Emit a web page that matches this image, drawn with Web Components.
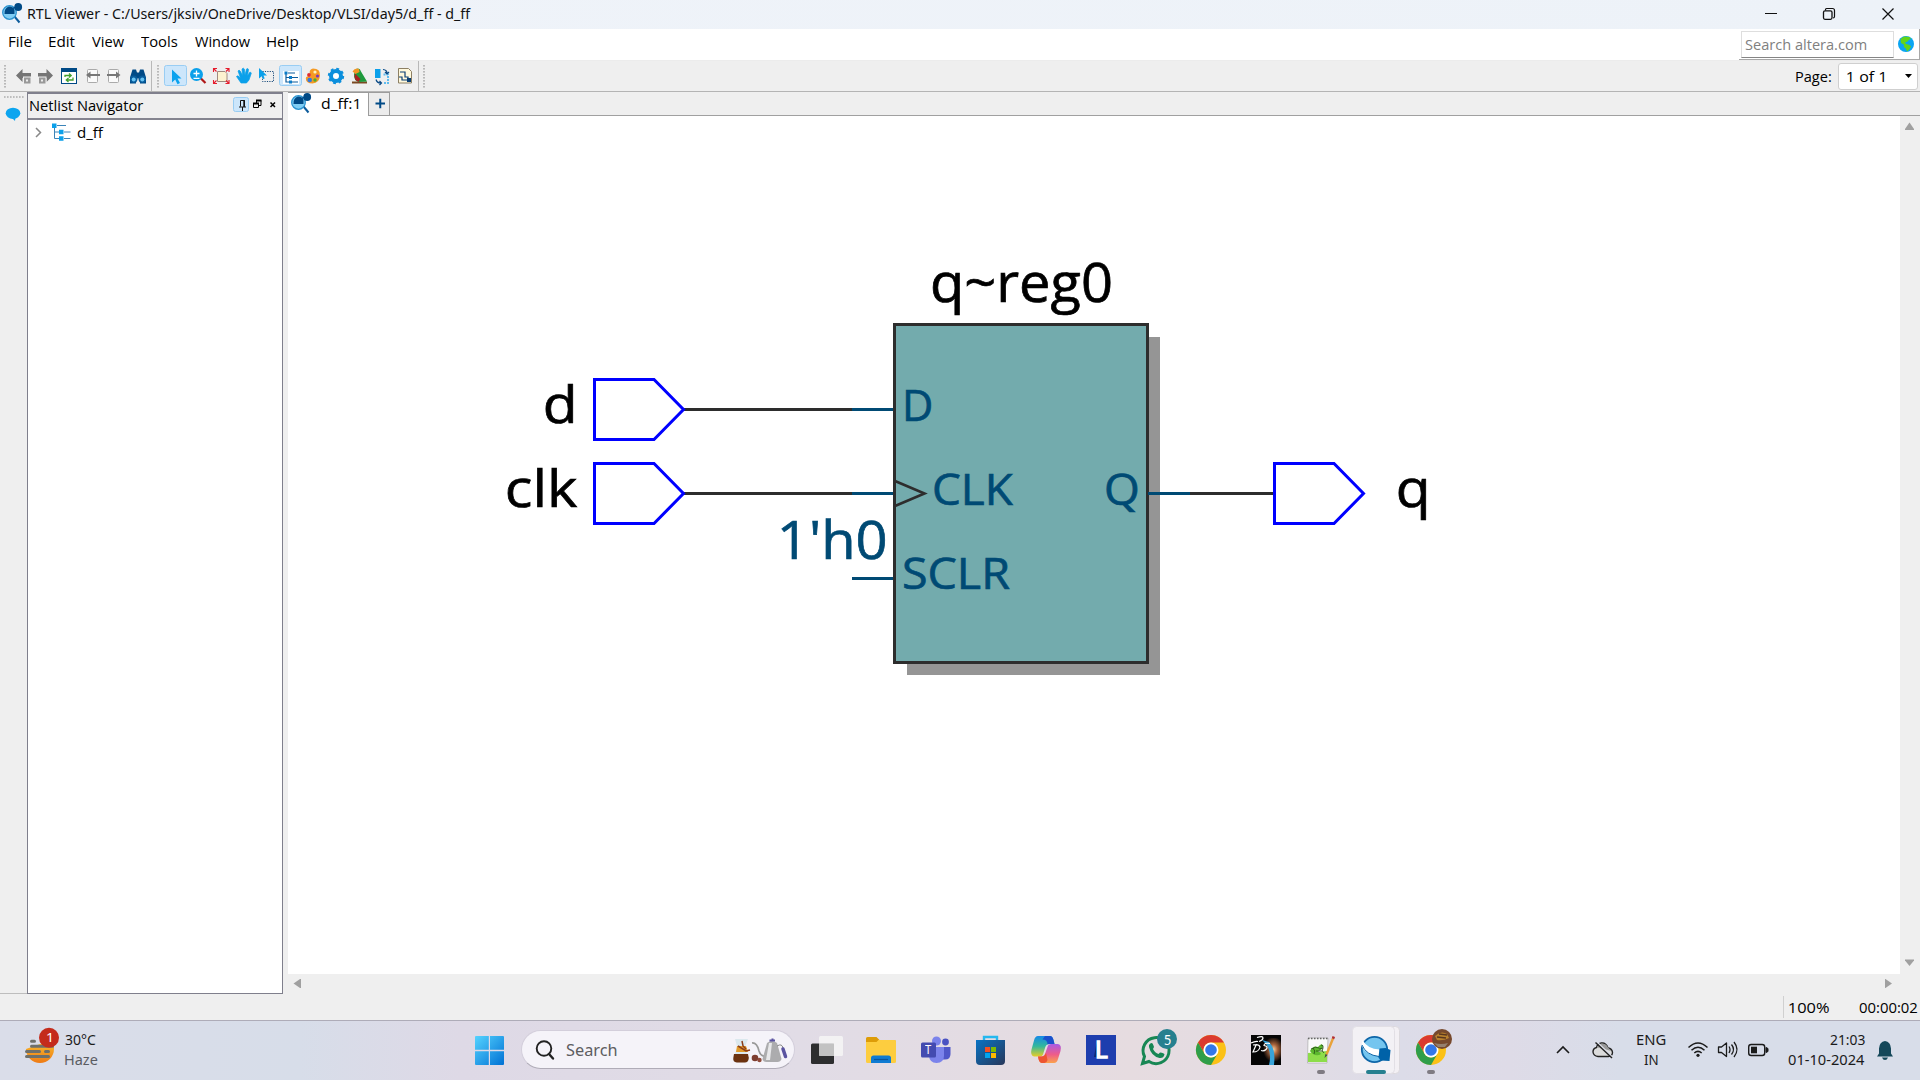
<!DOCTYPE html>
<html lang="en">
<head>
<meta charset="utf-8">
<title>RTL Viewer</title>
<style>
html,body{margin:0;padding:0;width:1920px;height:1080px;overflow:hidden;background:#efefef}
</style>
</head>
<body>
<rtl-desktop></rtl-desktop>
<script>
const UI = '"Open Sans","Noto Sans",sans-serif';
const SYS = '"Noto Sans","Open Sans",sans-serif';
const ctx = document.createElement('canvas').getContext('2d');
function ink(text, font) {
  ctx.font = font;
  const m = ctx.measureText(text);
  return { l: -m.actualBoundingBoxLeft, w: m.actualBoundingBoxLeft + m.actualBoundingBoxRight };
}
function define(tag, css, html, after) {
  const t = document.createElement('template');
  t.innerHTML = `<style>:host{display:block;box-sizing:border-box}*{box-sizing:border-box}${css}</style>${html}`;
  customElements.define(tag, class extends HTMLElement {
    constructor() {
      super();
      this.attachShadow({ mode: 'open' }).appendChild(t.content.cloneNode(true));
    }
    connectedCallback() { if (after) after(this, this.shadowRoot); }
  });
}

/* A label whose glyphs are scaled horizontally to fill a given ink width. */
define('fit-text', ':host{display:block;flex:none;white-space:pre}span{display:inline-block;transform-origin:0 50%}', '<span></span>', (el, root) => {
  const s = root.querySelector('span');
  const text = el.getAttribute('text'), w = +el.getAttribute('w'), size = el.getAttribute('size') || 14.2;
  const fam = el.hasAttribute('sys') ? SYS : UI;
  const m = ink(text, `${size}px ${fam}`);
  s.textContent = text;
  const k = w / m.w;
  s.style.cssText = `font:${size}px/20px ${fam};transform:translateX(${-m.l * k}px) scaleX(${k})`;
  el.style.width = w + 'px';
  el.style.height = '20px';
});

const dots = (x) => Array.from({ length: 8 }, (_, i) => `<rect x="${x}" y="${65 + i * 3}" width="2" height="1.6" fill="#b9b9b9"/>`).join('');
const lens = (x, y) => `<g transform="translate(${x} ${y})"><path d="M12.5 13.5l5 6" stroke="#0d5c9c" stroke-width="2" /><circle cx="7.500" cy="9.500" r="6.800" fill="#7fcdf4" stroke="#2a93d0" stroke-width="1.300"/><path d="M2.500 11q-.5-6 4.500-7.500 4.500 0 5.500 3.500v4z" fill="#004a86"/><path d="M10 6l5-3" stroke="#004a86" stroke-width="1.300"/><circle cx="16.200" cy="4" r="3.900" fill="#004a86"/></g>`;
const chrome = (x, y) => `<g transform="translate(${x} ${y})"><circle r="15" fill="#fbc116"/><path d="M-13-7.500A15 15 0 0 1 13-7.500H0A7.500 7.500 0 0 0-6.500 3.750z" fill="#db3a2f"/><path d="M-13-7.500A15 15 0 0 0 0 15L6.500 3.750A7.500 7.500 0 0 1-6.500 3.750z" fill="#2f9e4a"/><circle r="7.500" fill="#fff"/><circle r="5.800" fill="#3377e8"/></g>`;
const hl = (x) => `<rect x="${x + .5}" y="65.500" width="22" height="20" rx="2" fill="#cce6fb" stroke="#99cdf3"/>`;
const ICONS = {
  '': '',
  app: lens(2, 3),
  min: '<path d="M1765 13.500h12" stroke="#111" stroke-width="1"/>',
  max: '<path d="M1825.500 10.500V9.500q0-1 1-1h6q2 0 2 2v6q0 1.500-1.500 1.500" fill="none" stroke="#111" stroke-width="1.200"/><rect x="1823.500" y="10.800" width="8.500" height="8.500" rx="1.500" fill="none" stroke="#111" stroke-width="1.300"/>',
  close: '<path d="M1882.500 8.500l11 11m0-11l-11 11" stroke="#111" stroke-width="1.200"/>',
  globe: '<circle cx="1906" cy="44" r="8" fill="#0aa5f2"/><path d="M1900.500 39l3.500-2.500 5.500.5 1.500 2-2 .8-1.500 1.700-2.500 1 1 1.500 3 .8 2 1.500-1.500 3-2.500 2.300-1.200-3-2-1.500.2-2.300-3-1.800z" fill="#63d419"/>',
  grip: dots(4), grip2: dots(157), grip3: dots(423),
  railgrip: Array.from({ length: 7 }, (_, i) => `<rect x="${4 + i * 3}" y="96" width="1.600" height="2" fill="#bdbdbd"/>`).join(''),
  bubble: '<ellipse cx="13" cy="113.300" rx="7.300" ry="5.600" fill="#0da5ef"/><path d="M11 117l4 4 .5-4z" fill="#0da5ef"/>',
  back: '<path d="M16 75.500l6.500-6.500v4H31v5h-8.500v4z" fill="#757575"/><rect x="23.500" y="77" width="7.500" height="7" fill="#999" stroke="#efefef"/><rect x="26" y="79.500" width="2" height="2" fill="#eee"/>',
  fwd: '<path d="M53 75.500L46.500 69v4H38v5h8.500v4z" fill="#757575"/><rect x="38.500" y="77" width="7.500" height="7" fill="#999" stroke="#efefef"/><rect x="41" y="79.500" width="2" height="2" fill="#eee"/>',
  refresh: '<rect x="61.500" y="69" width="15" height="14.500" fill="#fff" stroke="#004a86"/><rect x="61" y="68" width="16" height="4" fill="#004a86"/><path d="M65 77v-1.500h5.500M69 73.500l2.200 2-2.200 2M73 77.500V80h-6M68.500 78l-2.200 2 2.200 2" fill="none" stroke="#43a02d" stroke-width="1.300"/>',
  pageback: '<rect x="87.500" y="69.500" width="10" height="13" rx="1" fill="#fafafa" stroke="#aaa"/><path d="M90 75h10" stroke="#777" stroke-width="2"/><path d="M86 75l4.500-3.500v7z" fill="#777"/>',
  pagefwd: '<rect x="108.500" y="69.500" width="10" height="13" rx="1" fill="#fafafa" stroke="#aaa"/><path d="M107 75h10" stroke="#777" stroke-width="2"/><path d="M120.500 75l-4.500-3.500v7z" fill="#777"/>',
  binoc: '<path d="M132.500 69.500h3.500l1 3h2l1-3h3.500l2.500 8v6h-6v-5h-4v5h-6v-6z" fill="#004a86"/><circle cx="133.700" cy="79.300" r="3.700" fill="#075c9c"/><circle cx="142.300" cy="79.300" r="3.700" fill="#075c9c"/><circle cx="133.700" cy="79.500" r="2" fill="#68c2f2"/><circle cx="142.300" cy="79.500" r="2" fill="#68c2f2"/>',
  cursor: hl(164) + '<path d="M172 69.500l9.500 9h-4l2.500 4.500-2.500 1.200-2.300-4.700-3.200 3z" fill="#0aa2ee"/>',
  zoomin: '<path d="M200.500 78l5 5" stroke="#b01818" stroke-width="2.200"/><circle cx="196.500" cy="74.500" r="6.500" fill="#0ba0ea"/><path d="M193.500 73.500h6m-3-3v6m-3 1.800h6" stroke="#fff" stroke-width="1.300"/>',
  fit: '<path d="M217.500 71.500h7.500l2 2v8h-9.500z" fill="#fdf3d0" stroke="#a08a80" stroke-width="1"/><path d="M213.500 72v-3.500h3.500M225.500 68.500h3.500V72M229 80v3.500h-3.500M217 83.500h-3.500V80M213.500 68.500l3 3m12.500-3l-3 3m3 12l-3-3m-12.500 3l3-3" fill="none" stroke="#e51c2c" stroke-width="1.100"/>',
  hand: '<path d="M241 83l-4.500-6.500q1-1.500 3 .5L240.500 78 238 71q1-1.700 2.200 0L242.500 75.500 242 69q1.300-1.700 2.300 0L245 75l1.500-6q1.500-1 2 .5L247.500 76l2-3.500q1.500-.8 1.800.7L249 80l-2.500 3z" fill="#0ba0ea" stroke="#0ba0ea" stroke-width=".7"/>',
  select: '<rect x="262.500" y="71.500" width="11" height="10" fill="none" stroke="#1b4c7c" stroke-dasharray="1.200 1.200"/><path d="M259 68l8 7.500h-3.500l1.200 3-1.600.6-1.400-2.800L259 78.500z" fill="#0ba0ea"/>',
  tree: hl(279) + '<rect x="283" y="71" width="16" height="13" fill="#fff"/><path d="M288 73h7M286 73v9h4M286 77.500h4M292 77.500h6M292 82h6" fill="none" stroke="#0d5c9c" stroke-width="1.200"/><path d="M284.500 71.500h3v3h-3zM289 76h3v3h-3zM289 80.500h3v3h-3z" fill="#0b7cc8"/>',
  palette: '<path d="M313 68.500q7.500 0 7 7-.5 7.500-7.500 8-6.500 0-6.700-5 .2-3 3.200-1.500 2.500 0 1-3-1.500-4.500 3-5.500z" fill="#f59a23"/><circle cx="315" cy="72" r="1.600" fill="#fff1c0"/><circle cx="317.500" cy="76" r="1.600" fill="#7b35c0"/><circle cx="315" cy="80" r="1.700" fill="#4caf30"/><circle cx="309.700" cy="80" r="2.300" fill="#3377e0"/><circle cx="309" cy="75" r="1.900" fill="#e02d2d"/>',
  gear: '<circle cx="336" cy="76" r="5" fill="#fff" stroke="#0b8fdc" stroke-width="4"/><circle cx="336" cy="76" r="7.200" fill="none" stroke="#0b8fdc" stroke-width="2" stroke-dasharray="2.830 2.830"/>',
  bird: '<path d="M352 82.500h15" stroke="#7a4a22" stroke-width="2"/><path d="M356 69q4-1.500 5 2.500l6 10-7.500.5q-6-1-5.500-8z" fill="#1e9a3c"/><path d="M355 73.500q-2 6 3.500 8.500l2-3z" fill="#a82020"/><path d="M352.500 71.500q2.500-4 6.500-2.500l.5 3-4 2z" fill="#f29522"/>',
  swap: '<rect x="375" y="69" width="5.500" height="9" fill="#0ba0ea"/><path d="M383.500 74.500h4.500v8.500h-4.500" fill="none" stroke="#5fbcee" stroke-width="2" stroke-dasharray="2 1"/><path d="M383 69.500q4 .5 4 3.500m-2-1l2 2 2-2M376 79.500q1 3.500 4.500 3.500m-1-2l2 2-2 2" fill="none" stroke="#0a4a86" stroke-width="1.200"/>',
  netpage: '<path d="M398.500 68.500h10l3 3v11.500h-13z" fill="#fff8dc" stroke="#8d8064"/><path d="M400 72h5v5h3v3M399 77h3v3h6" fill="none" stroke="#0a3f74" stroke-width="1.200"/><rect x="407" y="78" width="4" height="4" fill="#0a3f74"/>',
  comboarrow: '<path d="M1905 74h7l-3.500 4z" fill="#000"/>',
  pin: '<rect x="233.500" y="97.500" width="15" height="14" rx="2" fill="#cce6fb" stroke="#99cdf3"/><path d="M240.500 100.500h4v6m-4-6v6m-1.500.5h7m-3.500 0v4" fill="none" stroke="#111" stroke-width="1"/><path d="M244 100v7" stroke="#111" stroke-width="1.400"/>',
  restore: '<path d="M256.500 103v-2.500h4.500v5h-2M253.500 103.500h5v4h-5z" fill="none" stroke="#000"/><path d="M256 100.500h5.500M253 103.500h6" stroke="#000" stroke-width="1.800"/>',
  x: '<path d="M270.500 102.500l4.500 4.500m0-4.500l-4.500 4.500" stroke="#000" stroke-width="1.500"/>',
  chev: '<path d="M36 128l4.500 4.500L36 137" fill="none" stroke="#888" stroke-width="1.500"/>',
  treenode: '<path d="M57 125.500h9M54.500 127v11.500h5M54.500 132h5M64 132h6.500M64 138.500h6.500" fill="none" stroke="#3c84b8" stroke-width="1"/><path d="M52 123.500h4.500v4.500H52zM59 129.800h4.500v4.500H59zM59 136.200h4.500v4.500H59z" fill="#0ba0ea"/>',
  tablens: lens(291, 92),
  plus: '<path d="M375.500 103.500h9.500m-4.750-4.750v9.500" stroke="#004a86" stroke-width="2"/>',
  up: '<path d="M1909.500 122.500l4.500 6.500v1h-9v-1z" fill="#a0a0a0"/>',
  down: '<path d="M1909.500 966l4.500-5.500v-1h-9v1z" fill="#a0a0a0"/>',
  left: '<path d="M293.500 983.500l6.500-4.500h1v9h-1z" fill="#a0a0a0"/>',
  right: '<path d="M1892 983.500l-6.500-4.500h-.5v9h.5z" fill="#a0a0a0"/>',
  haze: '<defs><linearGradient id="h" x2="0" y2="1"><stop stop-color="#f8b52c"/><stop offset="1" stop-color="#ee7a14"/></linearGradient></defs><path d="M26 1049a14 14 0 0 0 28 0V1044H40z" fill="url(#h)"/><path d="M31.500 1041.300h3M31.500 1046.300h21M26.500 1051.400h13M45.500 1051.400h3M26.500 1056.500h22" stroke="#6e706c" stroke-width="3" stroke-linecap="round"/><circle cx="49" cy="1037.700" r="10" fill="#c42b1c"/>',
  start: '<defs><linearGradient id="ws" gradientUnits="userSpaceOnUse" x1="475" y1="1036" x2="504" y2="1065"><stop stop-color="#55d3ff"/><stop offset="1" stop-color="#0071d4"/></linearGradient></defs><path d="M476 1036h12.800v13.800H475V1037q0-1 1-1zM490 1036h13q1 0 1 1v12.800h-14zM475 1051.200h13.800V1065H476q-1 0-1-1zM490 1051.200h14V1064q0 1-1 1h-13z" fill="url(#ws)"/>',
  mag: '<circle cx="544" cy="1048.500" r="7.300" fill="none" stroke="#222" stroke-width="1.900"/><path d="M549 1054l4 4.500" stroke="#222" stroke-width="2.400" stroke-linecap="round"/>',
  coffee: '<path d="M735 1039h13l-3.500 9 4 8.500q1 5.500-3 6h-9q-4.500-.5-3-6l4-8.500z" fill="#dbe8ee"/><path d="M734 1054h14l.8 4q-.5 4.500-4 4.500h-8q-4-.5-3.500-4.500z" fill="#6c3210"/><path d="M737 1046h9l2 6h-12z" fill="#e29b2d"/><path d="M742 1041l1 5 3 3M738 1046l8 5 4-1" fill="none" stroke="#8c3e1a" stroke-width="1.500"/><circle cx="755" cy="1058" r="3.300" fill="#7d3d30"/><circle cx="759.500" cy="1060" r="2.200" fill="#8f4a3a"/><path d="M752 1043q5-.5 7 8 2 6 7 5" fill="none" stroke="#999" stroke-width="1.700"/><path d="M767 1043q5-4 10 0l4.500 16q-1 3-4 3h-11q-3.500 0-4-3z" fill="#acacae"/><path d="M769 1043l-3 17h4l2-17z" fill="#e8e8ea"/><path d="M769.500 1040.500h5.500m-2.500-2v2" stroke="#5a53a0" stroke-width="2"/><path d="M777 1046q5-3 6 2" fill="none" stroke="#888"/><path d="M783 1049l2.500 7.500" stroke="#5a53a0" stroke-width="3.500" stroke-linecap="round"/>',
  taskview: '<rect x="811" y="1043.500" width="23" height="20.500" rx="1.500" fill="#2d2e2f"/><rect x="819" y="1036" width="24" height="20" rx="1.500" fill="#f5f5f5" opacity=".88"/><path d="M819 1043.500h15V1056h-15z" fill="#bcbcbc" opacity=".8"/>',
  explorer: '<path d="M866 1038.500q0-1.500 1.500-1.500h9l3 3H894q2 0 2 2v6h-30z" fill="#dd9c08"/><path d="M866 1042h10.500l2-2H894.500q1.500 0 1.500 1.500v20q0 1.500-1.500 1.500h-27q-1.500 0-1.500-1.500z" fill="#fdcd3f"/><path d="M871 1063v-5q0-2.500 2.500-2.500h15q2.500 0 2.500 2.500v5z" fill="#0f7bd2"/><path d="M874 1059.500h14" stroke="#0a559c" stroke-width="1.200"/>',
  teams: '<circle cx="945.500" cy="1042" r="3.400" fill="#4a52c2"/><circle cx="936.500" cy="1041" r="4.500" fill="#7b83eb"/><path d="M939 1047h11.500v7q0 5.500-5.500 5.500h-6z" fill="#4f57c8"/><path d="M929 1047h15v9q0 6.500-7.500 7-7-.5-7.500-7z" fill="#7b83eb"/><rect x="921" y="1042.500" width="15" height="15" rx="1.500" fill="#434bb0"/>',
  store: '<defs><linearGradient id="s" x2="1" y2="1"><stop stop-color="#0873c4"/><stop offset="1" stop-color="#283759"/></linearGradient></defs><path d="M984 1041v-4h13v4" fill="none" stroke="#25b8ef" stroke-width="2.400"/><path d="M976 1040h29v21q0 4-4 4h-21q-4 0-4-4z" fill="url(#s)"/><path d="M985 1047h5v5h-5z" fill="#f25022"/><path d="M991 1047h5v5h-5z" fill="#7fba00"/><path d="M985 1053h5v5h-5z" fill="#00a4ef"/><path d="M991 1053h5v5h-5z" fill="#ffb900"/>',
  copilot: '<defs><linearGradient id="c1" x2="0" y2="1"><stop stop-color="#1689e8"/><stop offset=".5" stop-color="#33b89b"/><stop offset="1" stop-color="#e7cd28"/></linearGradient><linearGradient id="c2" x2="0" y2="1"><stop stop-color="#a75be5"/><stop offset=".55" stop-color="#ee5c8a"/><stop offset="1" stop-color="#fba24c"/></linearGradient></defs><path d="M1038 1036h12q2.500 0 3.500 4l1 4h-5q-3.500 0-4.500 4l-2 6.500q-.7 2-3 2h-6q-4-1-2.500-7l2.500-9q1-4.500 4-4.500z" fill="url(#c1)"/><path d="M1054 1063h-12q-2.500 0-3.500-4l-.5-2.500h3q3.500 0 4.500-4l2.500-7q.8-1.500 3-1.500h7q4 1 2.500 7l-2.500 8q-1 4-4 4z" fill="url(#c2)"/><path d="M1045 1036h5q2.500 0 3.500 4l1 4h-5.500l-1.500.5q0-5-5-5z" fill="#1b50cc"/><path d="M1038 1056.500h4q2.500 0 4-3.500l1.500 7q-.5 2.500-3 3h-2.500q-2.500 0-3.500-4z" fill="#ed5532"/>',
  lapp: '<rect x="1086" y="1035" width="30" height="30" fill="#1e3eae"/><path d="M1094 1057l2.500-14 3 11 6 3z" fill="#0d2a6c"/>',
  whatsapp: '<path d="M1142.500 1063.500l2-7a13 13 0 1 1 4.500 5z" fill="none" stroke="#188754" stroke-width="3"/><path d="M1149 1045q3-4 4.500.5l.5 1.500-1 2q2 4 5.500 5l1.500-1.500q4 .5 4.500 2-1 4-5 3.500-8.500-2-10.500-11z" fill="#188754"/><circle cx="1167" cy="1039" r="10" fill="#26808f"/>',
  chrome: chrome(1211, 1050),
  ds: '<defs><radialGradient id="d" cx=".6" cy=".5" r=".55"><stop stop-color="#f6d0a0"/><stop offset=".4" stop-color="#a8633a"/><stop offset="1" stop-color="#050505"/></radialGradient></defs><rect x="1251" y="1035" width="30" height="30" fill="#050505"/><rect x="1262" y="1038" width="19" height="23" fill="url(#d)"/><path d="M1262 1040q11 9 7 25h5q2-16-5-23z" fill="#38a3d8"/><path d="M1257 1037.500q6-2 6 .5 0 2-4 3.500M1251 1043q4-2 7-1.500M1256.500 1044l-3.500 8q6 0 7-5-1-3.500-7-2M1270 1043.500q-6-1-6 2 5 1 2 4-2 2-5 1" fill="none" stroke="#fff" stroke-width="1.200"/>',
  notepad: '<path d="M1308 1038h20l-1 25h-19.500z" fill="#fafafa" stroke="#aaa" stroke-width=".7"/><path d="M1308 1053l19-2v11h-19z" fill="#8ddd4a"/><path d="M1308 1038.500h20" stroke="#666" stroke-width="1.500" stroke-dasharray="1.500 1.500"/><path d="M1310 1051q3-6 8-4 4-5 5-1-1 5-5 5 5 3 1 4-6 1-9-4z" fill="#5cb82e"/><path d="M1311 1049q5-3 8-1m2-3q3 0 2 3l-4 1m-6-1q3 3 1 6m2-3h7m0-3q-2 3 1 5" fill="none" stroke="#244d14" stroke-width=".8"/><path d="M1333 1038.500l-6.500 16" stroke="#e8a23a" stroke-width="2.400"/><path d="M1333.800 1036.500l-.8 2.200" stroke="#b33030" stroke-width="2.600"/><path d="M1325.500 1054l-1 4 3-3z" fill="#444"/><rect x="1317" y="1070" width="8" height="4" rx="2" fill="#7f7b82"/>',
  rtl: '<rect x="1358" y="1026.500" width="41.500" height="47" rx="4" fill="#f3f0f4" stroke="#dcd9de"/><rect x="1352.500" y="1026.500" width="42" height="47" rx="4" fill="#f3f1f5" stroke="#e2dfe5"/><circle cx="1374.500" cy="1049.500" r="12.700" fill="#74c5ef" stroke="#0e66a8" stroke-width="1.800"/><path d="M1362.500 1040q5 9 17 9.500v7q-14-1-18-11z" fill="#fff"/><path d="M1362 1045q4 10 17 11.500" fill="none" stroke="#0e66a8" stroke-width="1"/><path d="M1379.500 1048.500l6-.5 5 2-1 11-9-.500-2-3z" fill="#0062a8"/><rect x="1366" y="1070" width="20" height="4" rx="2" fill="#26808f"/>',
  chrome2: chrome(1431, 1050) + '<circle cx="1442" cy="1039" r="10" fill="#77492d"/><path d="M1435 1036q6-6 12-2l2 4q-6 3-12 2z" fill="#b9812e"/><path d="M1434 1043q7 2 14 0l-3 4h-7z" fill="#95806f"/><path d="M1437 1037l9 1m-7-4l8 1" stroke="#5a371f" stroke-width="1.300"/><rect x="1427" y="1070" width="8" height="4" rx="2" fill="#7f7b82"/>',
  trayup: '<path d="M1557 1053l6-6 6 6" fill="none" stroke="#1b1b1b" stroke-width="1.600"/>',
  cloud: '<path d="M1598 1056.500h10.500q4-.5 4-4.200-.5-3.800-4.500-4.300-2-5.500-6.500-5-4 .5-5 4.500-3.500.8-3.500 4.500.5 4 5 4.500z" fill="#dcdcdc" stroke="#222" stroke-width="1.400"/><path d="M1597 1048q4-1.500 7 1l7.500 2-3.500-3.500q-1.500-4-6.500-4-4 .5-4.500 4.500z" fill="#9a9a9a"/><path d="M1597 1042l16 15.500" stroke="#dcdfe9" stroke-width="1.500"/><path d="M1595.500 1042.500l16.500 15.500" stroke="#222" stroke-width="1.400"/>',
  wifi: '<path d="M1688.500 1047.500q9.500-9 19 0M1691.500 1050.300q6.500-6 13 0M1694.300 1053q3.700-3.200 7.400 0" fill="none" stroke="#1b1b1b" stroke-width="1.500"/><circle cx="1698" cy="1055.300" r="1.600" fill="#1b1b1b"/>',
  volume: '<path d="M1718.500 1047h3l5-4v13.500l-5-4h-3z" fill="none" stroke="#1b1b1b" stroke-width="1.300" stroke-linejoin="round"/><path d="M1729 1046.500q2 3 0 6.500M1731.500 1044.500q4 5 0 10M1734 1042q6 7.500 0 15" fill="none" stroke="#1b1b1b" stroke-width="1.300"/>',
  battery: '<rect x="1748.700" y="1044.500" width="16" height="11" rx="2.500" fill="none" stroke="#1b1b1b" stroke-width="1.400"/><rect x="1751" y="1046.700" width="6" height="6.600" fill="#1b1b1b"/><path d="M1766 1047.500l2 1v3l-2 1z" fill="#1b1b1b" stroke="#1b1b1b"/>',
  bell: '<path d="M1877 1056.500l2-3v-5q.5-7 6-7.500 5.500.5 6 7.500v5l2 3z" fill="#15485a"/><path d="M1882 1057.500h6q-1 2.500-3 2.500t-3-2.500z" fill="#15485a"/>'
};
/* Icon artwork is drawn in window coordinates; box="x y w h" selects the part the element occupies. */
define('px-icon', ':host{flex:none}svg{display:block;overflow:visible}', '<svg xmlns="http://www.w3.org/2000/svg"></svg>', (el, root) => {
  const box = el.getAttribute('box'), s = root.querySelector('svg'), b = box.split(' ');
  s.setAttribute('viewBox', box); s.setAttribute('width', b[2]); s.setAttribute('height', b[3]);
  s.innerHTML = ICONS[el.getAttribute('name')];
  el.style.width = b[2] + 'px'; el.style.height = b[3] + 'px';
});

define('title-bar', ':host{display:flex;height:29px;background:linear-gradient(90deg,#eff3f9,#edf2f8);color:#111}fit-text{margin:4px 0 0 4px}.r{margin-left:auto;display:flex}',
  `<px-icon name="app" box="0 0 24 29"></px-icon><fit-text sys size="14" text="RTL Viewer - C:/Users/jksiv/OneDrive/Desktop/VLSI/day5/d_ff - d_ff" w="443.500"></fit-text>
  <div class="r"><px-icon name="min" box="1742 0 58 29"></px-icon><px-icon name="max" box="1800 0 58 29"></px-icon><px-icon name="close" box="1858 0 62 29"></px-icon></div>`);

define('menu-bar', ':host{display:flex;height:32px;background:#fff;padding-left:8.500px;border-bottom:1px solid #ececec;color:#000}nav{display:flex;gap:17px;padding-top:3px}.s{margin-left:auto;display:flex;width:181px;height:31px;border-bottom:1px solid #a8a8a8;border-right:1px solid #a8a8a8;padding:2px 0 0 2px}.i{width:153px;height:27px;border:1px solid #dedede;border-bottom-color:#858585;padding:3px 0 0 3px;color:#808080}',
  `<nav><fit-text text="File" w="23"></fit-text><fit-text text="Edit" w="26"></fit-text><fit-text text="View" w="32"></fit-text><fit-text text="Tools" w="37"></fit-text><fit-text text="Window" w="55"></fit-text><fit-text text="Help" w="31"></fit-text></nav>
  <div class="s"><div class="i"><fit-text text="Search altera.com" w="121"></fit-text></div><px-icon name="globe" box="1894 31 25 27"></px-icon></div>`);

define('tool-bar', ':host{display:flex;height:31px;background:#efefef;border-bottom:1px solid #b4b4b4}.sep{width:1px;height:30px;background:#b8b8b8}.p{margin-left:auto;display:flex;color:#000}.p>fit-text{margin:6px 7px 0 0}.c{display:flex;width:80px;height:27px;margin:2px 2px 0 0;border:1px solid #cfcfcf;border-radius:3px;background:#fff;padding:3px 0 0 8px}.c px-icon{margin-top:-3px}',
  `<px-icon name="grip" box="0 61 13 30"></px-icon><px-icon name="back" box="13 61 21 30"></px-icon><px-icon name="fwd" box="34 61 23 30"></px-icon><px-icon name="refresh" box="57 61 24 30"></px-icon><px-icon name="pageback" box="81 61 22 30"></px-icon><px-icon name="pagefwd" box="103 61 23 30"></px-icon><px-icon name="binoc" box="126 61 25 30"></px-icon><div class="sep"></div><px-icon name="grip2" box="152 61 12 30"></px-icon>`
  + ['cursor', 'zoomin', 'fit', 'hand', 'select', 'tree', 'palette', 'gear', 'bird', 'swap', 'netpage'].map((n, i) => `<px-icon name="${n}" box="${164 + i * 23} 61 23 30"></px-icon>`).join('')
  + `<px-icon name="" box="417 61 1 30"></px-icon><div class="sep"></div><px-icon name="grip3" box="419 61 12 30"></px-icon>
  <div class="p"><fit-text text="Page:" w="35"></fit-text><div class="c"><fit-text text="1 of 1" w="37"></fit-text><px-icon name="comboarrow" box="1884 64 33 25"></px-icon></div></div>`);

define('side-rail', ':host{width:27px;height:902px;border-bottom:1px solid #bdbdbd;flex:none}', '<px-icon name="railgrip" box="0 92 27 10"></px-icon><px-icon name="bubble" box="0 102 27 22"></px-icon>');

define('netlist-navigator', ':host{width:256px;height:902px;border:1px solid #7f7f8c;border-top-width:2px;background:#fff;color:#000;flex:none;margin-right:5px}.h{display:flex;height:26px;background:#efefef;border-bottom:2px solid #84848f;padding-left:2px}.h fit-text{margin-top:2px}.ic{margin-left:auto;display:flex}.t{display:flex;padding-top:3px}.t fit-text{margin:0 0 0 4.500px}',
  `<div class="h"><fit-text text="Netlist Navigator" w="113.500"></fit-text><div class="ic"><px-icon name="pin" box="233 94 18 24"></px-icon><px-icon name="restore" box="251 94 15 24"></px-icon><px-icon name="x" box="266 94 16 24"></px-icon></div></div>
  <div class="t"><px-icon name="chev" box="28 123 21 20"></px-icon><px-icon name="treenode" box="49 123 23 20"></px-icon><fit-text text="d_ff" w="27.500"></fit-text></div>`);

define('tab-strip', ':host{display:flex;height:24px;border-bottom:1px solid #a0a0a0;background:#efefef;color:#000}.t{display:flex;width:80px;height:24px;background:#fff;border-top:1px solid #9a9a9a}.t fit-text{margin:1px 0 0 3.500px}.n{width:22px;height:24px;border:1px solid #9c9c9c;background:#ececec}',
  `<div class="t"><px-icon name="tablens" box="288 92 29 22"></px-icon><fit-text text="d_ff:1" w="37"></fit-text></div><div class="n"><px-icon name="plus" box="369 93 20 22"></px-icon></div>`);

const port = (x, y) => `<path d="M${x} ${y - 30}h59.500l29.500 30-29.500 30h-59.500z" fill="#fff" stroke="#00f" stroke-width="3"/>`;
const lab = (t, x0, x1, y, s, c) => `<text data-x0="${x0}" data-x1="${x1}" data-y="${y}" font-size="${s}" fill="${c}" stroke="${c}" stroke-width=".7">${t}</text>`;
define('schematic-view', ':host{width:1612px;height:858px;background:#fff}svg{display:block}text{font-family:"Open Sans","Noto Sans",sans-serif}',
  `<svg viewBox="288 116 1612 858" width="1612" height="858">
  <rect x="907" y="337" width="253" height="338" fill="#959595"/>
  <rect x="894.500" y="324.500" width="253" height="338" fill="#73abad" stroke="#2d2d2d" stroke-width="3"/>
  <path d="M683 409.500h169M683 493.500h169M1190 493.500h84" stroke="#2d2d2d" stroke-width="3"/>
  <path d="M852 409.500h41M852 493.500h41M852 578.500h41M1148 493.500h42" stroke="#004a74" stroke-width="3"/>
  <path d="M895 481l29.500 12.500-29.500 12.500" fill="none" stroke="#2d2d2d" stroke-width="2.600"/>
  ${port(594.5, 409.5)}${port(594.5, 493.5)}${port(1274.5, 493.5)}
  ${lab('q~reg0', 932, 1111, 302, 54, '#000')}${lab('d', 545, 573.5, 422.5, 52, '#000')}${lab('clk', 507, 577, 506.5, 52, '#000')}${lab('q', 1398, 1426, 507, 53, '#000')}
  ${lab('D', 906, 931.5, 421, 44, '#004a74')}${lab('CLK', 934, 1013.5, 505, 44.5, '#004a74')}${lab('SCLR', 904, 1009.5, 589, 44.5, '#004a74')}${lab('Q', 1106, 1137, 505, 44.5, '#004a74')}${lab("1'h0", 781, 885, 559, 53.5, '#004a74')}
  </svg>`, (el, root) => {
  for (const t of root.querySelectorAll('text')) {
    const m = ink(t.textContent, `${t.getAttribute('font-size')}px ${UI}`);
    const k = (t.dataset.x1 - t.dataset.x0) / m.w;
    t.setAttribute('transform', `translate(${t.dataset.x0 - m.l * k} ${t.dataset.y}) scale(${k} 1)`);
  }
});

define('work-area', ':host{flex:1;min-width:0;height:928px}.m{display:flex;height:858px}.v{width:20px;display:flex;flex-direction:column;justify-content:space-between}.h{display:flex;justify-content:space-between;width:1612px;height:19px}.st{display:flex;justify-content:flex-end;height:27px;padding:3px 2px 0 0;color:#000}.sep{width:1px;height:22px;background:#d0d0d0;margin-right:5px}.st fit-text{margin-top:2px}.st .z{margin-right:30px}',
  `<tab-strip></tab-strip><div class="m"><schematic-view></schematic-view><div class="v"><px-icon name="up" box="1900 116 20 20"></px-icon><px-icon name="down" box="1900 954 20 20"></px-icon></div></div>
  <div class="h"><px-icon name="left" box="288 974 20 19"></px-icon><px-icon name="right" box="1880 974 20 19"></px-icon></div>
  <div class="st"><div class="sep"></div><fit-text class="z" size="13.800" text="100%" w="40"></fit-text><fit-text size="13.800" text="00:00:02" w="59"></fit-text></div>`);

define('task-bar', `:host{display:flex;height:60px;border-top:1px solid #aeacb8;background:linear-gradient(90deg,#dadde9 0,#d7dde9 300px,#ded9e6 460px,#e1dce6 800px,#e6dce0 1130px,#e4dce3 1260px,#dcdce8 1400px,#dedbe7 1510px,#d8dde9 1620px,#d8dde9 100%);color:#1b1b1b}
  .w{display:flex;width:475px}.wi{position:relative;width:64.500px}.wi fit-text{position:absolute;left:47px;top:7px;color:#fff}.tx{padding-top:8px}.tx fit-text+fit-text{color:#5a5c62;margin-top:-.5px}
  .s{display:flex;width:274px;height:39px;margin:9px 4px 0 17px;border-radius:20px;background:#f5f3f9;border:1px solid #d3cedb;border-bottom-color:#b0acb8;color:#5d5d61}.s fit-text{margin:9px 0 0 13px}.s .c{margin-left:auto;margin-right:6px}
  .a{position:relative}.a fit-text{position:absolute;color:#fff}
  .tr{margin-left:auto;display:flex}.k{display:flex;flex-direction:column;padding-top:8px}.mid{align-items:center;width:60px}.end{align-items:flex-end;width:85px;padding-right:8px}`,
  `<div class="w"><div class="wi"><px-icon name="haze" box="0 1021 64.500 59"></px-icon><fit-text sys text="1" size="12.500" w="4.500"></fit-text></div><div class="tx"><fit-text sys size="14.800" text="30°C" w="30.500"></fit-text><fit-text sys size="14.800" text="Haze" w="32.500"></fit-text></div></div>
  <px-icon name="start" box="475 1021 29 59"></px-icon>
  <div class="s"><px-icon name="mag" box="522 1031 31 36"></px-icon><fit-text sys size="15.500" text="Search" w="51"></fit-text><px-icon class="c" name="coffee" box="732 1031 56 36"></px-icon></div>`
  + ['taskview', 'explorer', 'teams', 'store', 'copilot', 'lapp', 'whatsapp', 'chrome', 'ds', 'notepad', 'rtl', 'chrome2'].map((n, i) => {
    const badge = { teams: '<fit-text sys style="left:126px;left:16px;top:18.500px" size="12" text="T" w="6.500"></fit-text>', lapp: '<fit-text style="left:23px;top:18px;-webkit-text-stroke:1.500px #fff" size="23" text="L" w="10.500"></fit-text>', whatsapp: '<fit-text sys style="left:34.500px;top:8px" size="14.500" text="5" w="7"></fit-text>' }[n] || '';
    return `<div class="a"><px-icon name="${n}" box="${799 + 55 * i} 1021 55 59"></px-icon>${badge}</div>`;
  }).join('')
  + `<div class="tr"><px-icon name="trayup" box="1545 1021 36 59"></px-icon><px-icon name="cloud" box="1581 1021 40 59"></px-icon><div class="k mid"><fit-text sys size="14.800" text="ENG" w="28.500"></fit-text><fit-text sys size="14.800" text="IN" w="13.500"></fit-text></div>
  <px-icon name="wifi" box="1681 1021 32 59"></px-icon><px-icon name="volume" box="1713 1021 30 59"></px-icon><px-icon name="battery" box="1743 1021 45 59"></px-icon>
  <div class="k end"><fit-text sys size="14.800" text="21:03" w="35"></fit-text><fit-text sys style="margin-top:-.5px" size="14.800" text="01-10-2024" w="77"></fit-text></div><px-icon name="bell" box="1873 1021 47 59"></px-icon></div>`);

define('rtl-desktop', ':host{width:1920px;height:1080px;background:#efefef}.b{display:flex;height:928px}',
  '<title-bar></title-bar><menu-bar></menu-bar><tool-bar></tool-bar><div class="b"><side-rail></side-rail><netlist-navigator></netlist-navigator><work-area></work-area></div><task-bar></task-bar>');
</script>
</body>
</html>
